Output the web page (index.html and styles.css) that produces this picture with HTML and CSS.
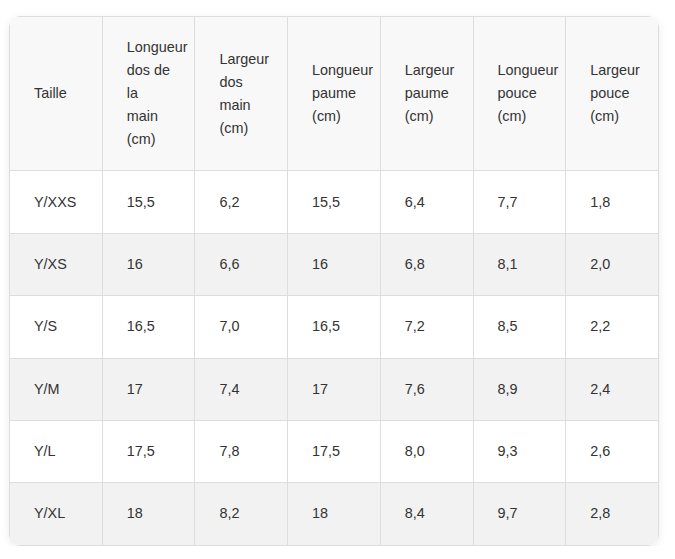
FILE: index.html
```html
<!DOCTYPE html>
<html lang="fr">
<head>
<meta charset="utf-8">
<link rel="stylesheet" href="styles.css">
</head>
<body>
<div class="wrap">
<table class="sizes">
<thead>
<tr>
<th>Taille</th>
<th>Longueur dos de la main (cm)</th>
<th>Largeur dos main (cm)</th>
<th>Longueur paume (cm)</th>
<th>Largeur paume (cm)</th>
<th>Longueur pouce (cm)</th>
<th>Largeur pouce (cm)</th>
</tr>
</thead>
<tbody>
<tr><td>Y/XXS</td><td>15,5</td><td>6,2</td><td>15,5</td><td>6,4</td><td>7,7</td><td>1,8</td></tr>
<tr><td>Y/XS</td><td>16</td><td>6,6</td><td>16</td><td>6,8</td><td>8,1</td><td>2,0</td></tr>
<tr><td>Y/S</td><td>16,5</td><td>7,0</td><td>16,5</td><td>7,2</td><td>8,5</td><td>2,2</td></tr>
<tr><td>Y/M</td><td>17</td><td>7,4</td><td>17</td><td>7,6</td><td>8,9</td><td>2,4</td></tr>
<tr><td>Y/L</td><td>17,5</td><td>7,8</td><td>17,5</td><td>8,0</td><td>9,3</td><td>2,6</td></tr>
<tr><td>Y/XL</td><td>18</td><td>8,2</td><td>18</td><td>8,4</td><td>9,7</td><td>2,8</td></tr>
</tbody>
</table>
</div>
</body>
</html>
```
FILE: styles.css
```css
body {
  margin: 0;
  background: #ffffff;
  font-family: "Liberation Sans", Arial, sans-serif;
  color: #333333;
}
.wrap {
  margin: 16px 0 0 9px;
  width: 650px;
  border-radius: 12px;
  overflow: hidden;
  box-shadow: 0 2px 8px rgba(0, 0, 0, 0.08);
}
.sizes {
  width: 100%;
  border-collapse: collapse;
  table-layout: fixed;
  font-size: 14.4px;
  line-height: 23px;
}
.sizes th,
.sizes td {
  border: 1px solid #dddddd;
  padding: 19.2px 24px;
  text-align: left;
  vertical-align: middle;
  font-weight: normal;
}
.sizes thead th {
  background: #f8f8f8;
}
.sizes tbody tr:nth-child(odd) td {
  background: #ffffff;
}
.sizes tbody tr:nth-child(even) td {
  background: #f2f2f2;
}
```
